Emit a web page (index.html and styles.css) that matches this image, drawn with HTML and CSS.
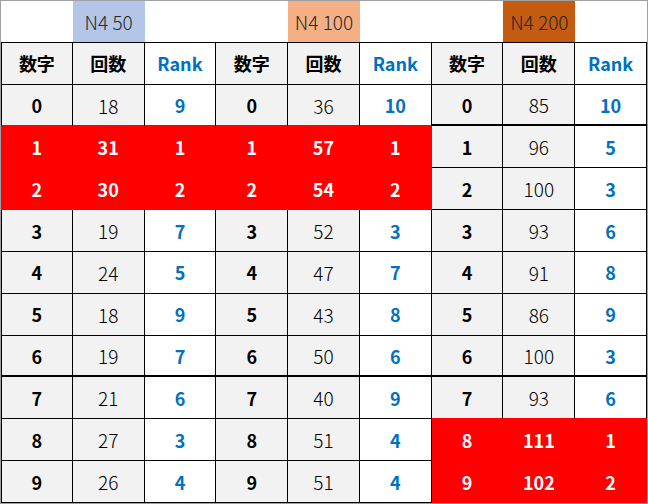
FILE: index.html
```html
<!DOCTYPE html>
<html lang="ja">
<head>
<meta charset="utf-8">
<title>N4 数字 回数 Rank</title>
<link rel="stylesheet" href="styles.css">
</head>
<body>
<div class="sheet">
  <div class="c top"></div><div class="c top lbl blue">N4 50</div><div class="c top"></div>
  <div class="c top"></div><div class="c top lbl peach">N4 100</div><div class="c top"></div>
  <div class="c top"></div><div class="c top lbl rust">N4 200</div><div class="c top"></div>

  <div class="c first g key">数字</div><div class="c g key">回数</div><div class="c rank">Rank</div>
  <div class="c g key">数字</div><div class="c g key">回数</div><div class="c rank">Rank</div>
  <div class="c g key">数字</div><div class="c g key">回数</div><div class="c rank">Rank</div>

  <div class="c first g key cut">0</div><div class="c g cnt cut">18</div><div class="c rank cut">9</div>
  <div class="c g key cut">0</div><div class="c g cnt cut">36</div><div class="c rank cut">10</div>
  <div class="c g key thick">0</div><div class="c g cnt thick">85</div><div class="c rank thick">10</div>

  <div class="c first hot">1</div><div class="c hot">31</div><div class="c hot">1</div>
  <div class="c hot">1</div><div class="c hot">57</div><div class="c hot">1</div>
  <div class="c g key">1</div><div class="c g cnt">96</div><div class="c rank">5</div>

  <div class="c first hot">2</div><div class="c hot">30</div><div class="c hot">2</div>
  <div class="c hot">2</div><div class="c hot">54</div><div class="c hot">2</div>
  <div class="c g key">2</div><div class="c g cnt">100</div><div class="c rank">3</div>

  <div class="c first g key">3</div><div class="c g cnt">19</div><div class="c rank">7</div>
  <div class="c g key">3</div><div class="c g cnt">52</div><div class="c rank">3</div>
  <div class="c g key">3</div><div class="c g cnt">93</div><div class="c rank">6</div>

  <div class="c first g key">4</div><div class="c g cnt">24</div><div class="c rank">5</div>
  <div class="c g key">4</div><div class="c g cnt">47</div><div class="c rank">7</div>
  <div class="c g key">4</div><div class="c g cnt">91</div><div class="c rank">8</div>

  <div class="c first g key">5</div><div class="c g cnt">18</div><div class="c rank">9</div>
  <div class="c g key">5</div><div class="c g cnt">43</div><div class="c rank">8</div>
  <div class="c g key">5</div><div class="c g cnt">86</div><div class="c rank">9</div>

  <div class="c first g key thick">6</div><div class="c g cnt thick">19</div><div class="c rank thick">7</div>
  <div class="c g key thick">6</div><div class="c g cnt thick">50</div><div class="c rank thick">6</div>
  <div class="c g key thick">6</div><div class="c g cnt thick">100</div><div class="c rank thick">3</div>

  <div class="c first g key">7</div><div class="c g cnt">21</div><div class="c rank">6</div>
  <div class="c g key">7</div><div class="c g cnt">40</div><div class="c rank">9</div>
  <div class="c g key cut">7</div><div class="c g cnt cut">93</div><div class="c rank cut">6</div>

  <div class="c first g key">8</div><div class="c g cnt">27</div><div class="c rank">3</div>
  <div class="c g key">8</div><div class="c g cnt">51</div><div class="c rank">4</div>
  <div class="c hot">8</div><div class="c hot">111</div><div class="c hot">1</div>

  <div class="c first g key">9</div><div class="c g cnt">26</div><div class="c rank">4</div>
  <div class="c g key">9</div><div class="c g cnt">51</div><div class="c rank">4</div>
  <div class="c hot">9</div><div class="c hot">102</div><div class="c hot">2</div>
</div>
</body>
</html>
```
FILE: styles.css
```css
html, body {
  margin: 0;
  padding: 0;
  background: #ffffff;
}

.sheet {
  width: 648px;
  height: 504px;
  box-sizing: border-box;
  border: 1px solid #a0a0a0;
  display: grid;
  grid-template-columns: repeat(9, 1fr);
  grid-template-rows: repeat(12, 1fr);
  font-family: "Noto Sans CJK JP", "Noto Sans", sans-serif;
  font-size: 18px;
  color: #000000;
}

.c {
  box-sizing: border-box;
  border-right: 1px solid #000000;
  border-bottom: 1px solid #000000;
  display: flex;
  align-items: center;
  justify-content: center;
  background: #ffffff;
  line-height: 1;
}

.top {
  border-right: none;
}

.lbl {
  font-weight: 300;
  font-size: 19px;
  color: #262626;
}

.blue { background: #b4c6e7; }
.peach { background: #f4b084; }
.rust { background: #c55a11; }

.first {
  border-left: 1px solid #000000;
}

.g {
  background: #f2f2f2;
}

.key {
  font-weight: 700;
}

.cnt {
  font-weight: 300;
  font-size: 19px;
}

.rank {
  font-weight: 700;
  color: #0070c0;
}

.cut {
  border-bottom-color: #ff0000;
}

.thick {
  border-bottom-width: 2px;
}

.hot {
  background: #ff0000;
  color: #ffffff;
  font-weight: 700;
  border-color: #ff0000;
}
```
